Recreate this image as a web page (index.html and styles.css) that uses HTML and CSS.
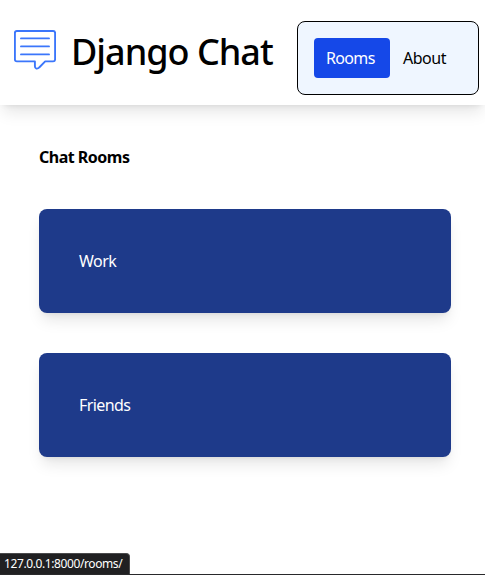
FILE: index.html
```html
<!DOCTYPE html>
<html lang="en">
<head>
<meta charset="utf-8">
<title>Django Chat</title>
<link rel="stylesheet" href="styles.css">
</head>
<body>
<header class="header">
  <svg class="logo" viewBox="0 0 42 40" fill="none" stroke="#3b76fb" stroke-linejoin="round" stroke-linecap="round">
    <path stroke-width="1.9" d="M2.9 1H39.1Q41.1 1 41.1 3V29.4Q41.1 31.4 39.1 31.4H31.2L25.2 37.5Q24 38.9 22.4 38.6Q20.9 38.1 20.9 36.2V31.4H2.9Q.9 31.4 .9 29.4V3Q.9 1 2.9 1Z"/>
    <path stroke-width="1.9" d="M7 8.4H35M7 16.4H35M7 24.4H35"/>
  </svg>
  <h1 class="title">Django Chat</h1>
  <nav class="nav">
    <a class="link active"><span class="rooms">Rooms</span></a>
    <a class="link"><span class="about">About</span></a>
  </nav>
</header>
<main class="main">
  <h2 class="heading">Chat Rooms</h2>
  <div class="cards">
    <a class="card"><span class="work">Work</span></a>
    <a class="card"><span class="friends">Friends</span></a>
  </div>
</main>
<div class="status">127.0.0.1:8000/rooms/</div>
</body>
</html>
```
FILE: styles.css
```css
* { box-sizing: border-box; }
body {
  margin: 0;
  height: 575px;
  overflow: hidden;
  position: relative;
  background: #fff;
  border-bottom: 1px solid #29292b;
  color: #000;
  font: 16px/24px "Noto Sans", "Open Sans", sans-serif;
}
.header {
  display: flex;
  height: 105px;
  padding: 21px 6px 10px 14px;
  background: #fff;
  box-shadow: 0 10px 15px -3px rgba(0,0,0,.1), 0 4px 6px -4px rgba(0,0,0,.1);
}
.logo { width: 42px; height: 40px; margin-top: 9px; flex: none; }
.title {
  margin: 11px 0 0 15px;
  width: 210px;
  flex: none;
  font-size: 36px;
  line-height: 40px;
  font-weight: 500;
  letter-spacing: -1px;
  white-space: nowrap;
}
.nav {
  margin-left: 16px;
  width: 182px;
  height: 74px;
  padding: 16px;
  display: flex;
  flex: none;
  background: #eff6ff;
  border: 1px solid #000;
  border-radius: 8px;
}
.link { height: 40px; padding: 8px 12px 8px 13px; border-radius: 4px; }
.active { width: 76px; padding-left: 12px; background: #1548e8; color: #fff; flex: none; }
.rooms { letter-spacing: -.65px; }
.about { letter-spacing: -.5px; }
.main { padding: 40px 34px 0 39px; }
.heading {
  margin: 0;
  font-size: 16px;
  line-height: 24px;
  font-weight: 700;
  letter-spacing: -.5px;
}
.cards { display: grid; gap: 40px; margin-top: 40px; }
.card {
  height: 104px;
  padding: 40px;
  color: #fff;
  background: #1e3a8a;
  border-radius: 8px;
  box-shadow: 0 10px 15px -3px rgba(0,0,0,.1), 0 4px 6px -4px rgba(0,0,0,.1);
}
.work { letter-spacing: -.5px; }
.friends { letter-spacing: -.6px; }
.status {
  position: absolute;
  left: 0;
  bottom: 0;
  width: 130px;
  height: 21px;
  padding-left: 4px;
  border-top: 1px solid #4a4a4c;
  border-right: 1px solid #4a4a4c;
  border-radius: 0 4px 0 0;
  background: #202022;
  color: #fff;
  font-size: 12px;
  line-height: 20px;
  letter-spacing: -.4px;
  white-space: nowrap;
}
```
